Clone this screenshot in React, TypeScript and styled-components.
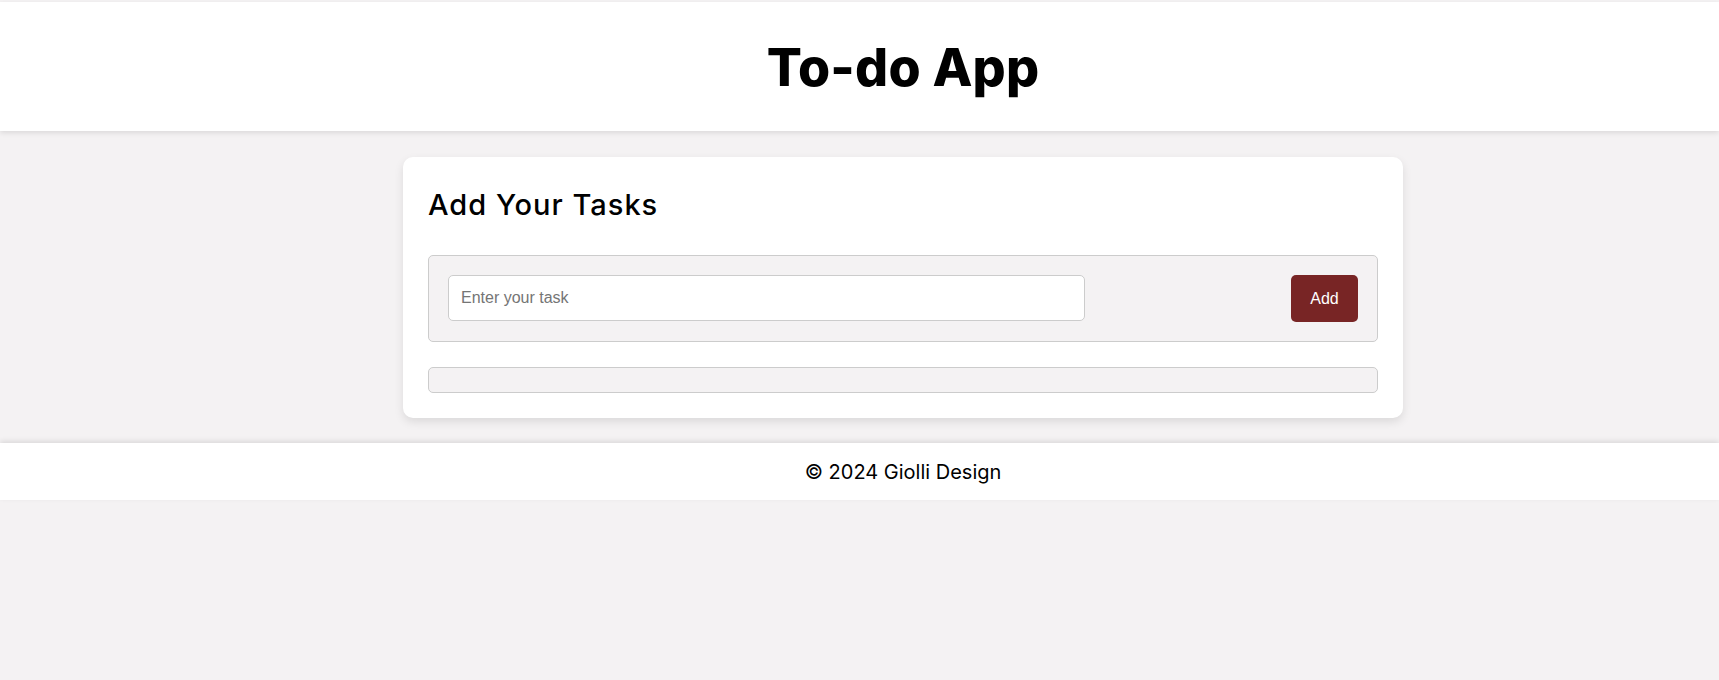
import React from "react";
import styled, { createGlobalStyle } from "styled-components";

const OFFSET = "87px";

const GlobalStyle = createGlobalStyle`
  html, body {
    margin: 0;
    padding: 0;
    overflow: hidden;
    background: #f4f2f3;
  }
  body {
    font-family: Inter, "Liberation Sans", sans-serif;
    color: #000;
  }
`;

const Page = styled.div`
  min-height: 680px;
  padding-top: 2px;
  background: #f4f2f3;
  display: flex;
  flex-direction: column;
`;

const Header = styled.header`
  height: 129px;
  padding-left: ${OFFSET};
  background: #ffffff;
  box-shadow: 0 2px 5px rgba(0, 0, 0, 0.1);
  display: flex;
  align-items: center;
  justify-content: center;
  position: relative;
  z-index: 1;
`;

const Title = styled.h1`
  margin: 2px 0 0;
  font-family: Inter, "Liberation Sans", sans-serif;
  font-weight: 800;
  font-size: 52px;
  line-height: 1;
  letter-spacing: 0.2px;
`;

const Main = styled.main`
  padding: 26px 0 25px ${OFFSET};
  display: flex;
  justify-content: center;
`;

const Card = styled.section`
  width: 1000px;
  box-sizing: border-box;
  padding: 25px;
  background: #ffffff;
  border-radius: 10px;
  box-shadow: 0 4px 10px rgba(0, 0, 0, 0.1);
`;

const CardTitle = styled.h2`
  margin: 3px 0 30px;
  font-family: Inter, "Liberation Sans", sans-serif;
  font-weight: 500;
  font-size: 29px;
  letter-spacing: 1px;
  line-height: 40px;
`;

const Form = styled.form`
  display: flex;
  align-items: stretch;
  justify-content: space-between;
  padding: 19px;
  background: #f4f2f3;
  border: 1px solid #cccccc;
  border-radius: 5px;
`;

const TaskInput = styled.input`
  width: 70%;
  height: 46px;
  box-sizing: border-box;
  padding: 0 12px;
  border: 1px solid #cccccc;
  border-radius: 5px;
  background: #ffffff;
  font-family: "Liberation Sans", Arial, sans-serif;
  font-size: 16px;
  color: #333;
  outline: none;
  &::placeholder {
    color: #757575;
  }
`;

const AddButton = styled.button`
  width: 67px;
  height: 47px;
  border: none;
  border-radius: 5px;
  background: #782525;
  color: #ffffff;
  font-family: "Liberation Sans", Arial, sans-serif;
  font-size: 16px;
  cursor: pointer;
`;

const TaskList = styled.ul`
  list-style: none;
  margin: 25px 0 0;
  padding: 12px;
  background: #f4f2f3;
  border: 1px solid #cccccc;
  border-radius: 5px;
`;

const Footer = styled.footer`
  height: 57px;
  padding-left: ${OFFSET};
  background: #ffffff;
  box-shadow: 0 -2px 5px rgba(0, 0, 0, 0.1);
  display: flex;
  align-items: center;
  justify-content: center;
`;

const FooterText = styled.p`
  margin: 0;
  font-family: Inter, "Liberation Sans", sans-serif;
  font-size: 20px;
  font-weight: 400;
`;

export default function App() {
  return (
    <>
      <GlobalStyle />
      <Page>
        <Header>
          <Title>To-do App</Title>
        </Header>
        <Main>
          <Card>
            <CardTitle>Add Your Tasks</CardTitle>
            <Form onSubmit={(e) => e.preventDefault()}>
              <TaskInput type="text" placeholder="Enter your task" />
              <AddButton type="submit">Add</AddButton>
            </Form>
            <TaskList />
          </Card>
        </Main>
        <Footer>
          <FooterText>© 2024 Giolli Design</FooterText>
        </Footer>
      </Page>
    </>
  );
}
